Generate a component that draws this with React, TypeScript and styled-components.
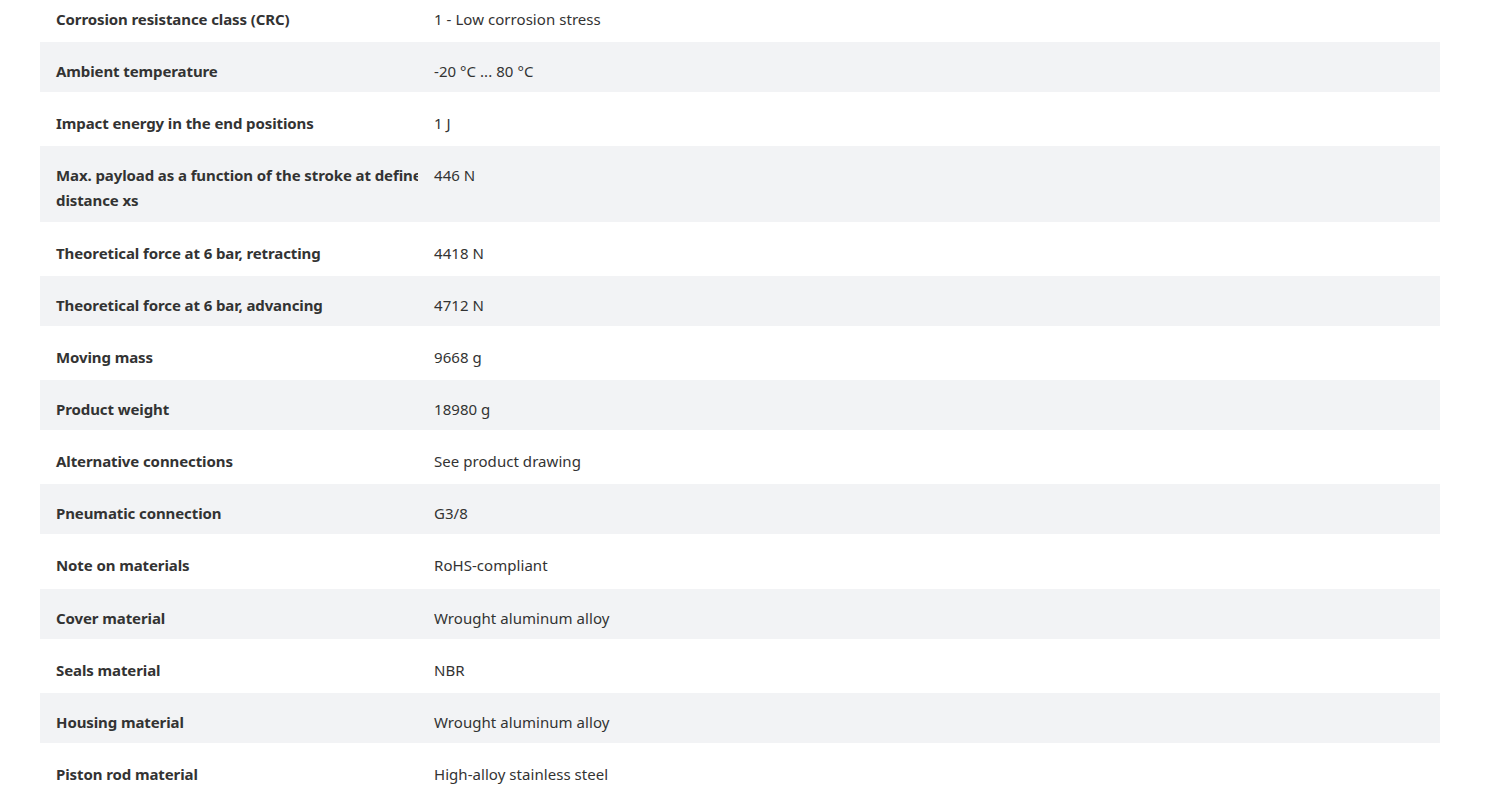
import styled, { createGlobalStyle } from 'styled-components';

const GlobalStyle = createGlobalStyle`
  html, body {
    margin: 0;
    padding: 0;
    background: #fff;
    overflow: hidden;
  }
  body {
    font-family: "Noto Sans", "Open Sans", sans-serif;
    color: #333;
  }
`;

// 技術データの行（ラベル／値）
const rows: { label: string[]; value: string }[] = [
  { label: ['Corrosion resistance class (CRC)'], value: '1 - Low corrosion stress' },
  { label: ['Ambient temperature'], value: '-20 °C ... 80 °C' },
  { label: ['Impact energy in the end positions'], value: '1 J' },
  { label: ['Max. payload as a function of the stroke at defined', 'distance xs'], value: '446 N' },
  { label: ['Theoretical force at 6 bar, retracting'], value: '4418 N' },
  { label: ['Theoretical force at 6 bar, advancing'], value: '4712 N' },
  { label: ['Moving mass'], value: '9668 g' },
  { label: ['Product weight'], value: '18980 g' },
  { label: ['Alternative connections'], value: 'See product drawing' },
  { label: ['Pneumatic connection'], value: 'G3/8' },
  { label: ['Note on materials'], value: 'RoHS-compliant' },
  { label: ['Cover material'], value: 'Wrought aluminum alloy' },
  { label: ['Seals material'], value: 'NBR' },
  { label: ['Housing material'], value: 'Wrought aluminum alloy' },
  { label: ['Piston rod material'], value: 'High-alloy stainless steel' },
];

export default function App() {
  return (
    <>
      <GlobalStyle />
      <Page>
        <DataTable>
          {rows.map((row, i) => (
            <Row key={i} striped={i % 2 === 1}>
              <LabelCell>
                {row.label.map((line, j) => (
                  <LabelLine key={j}>{line}</LabelLine>
                ))}
              </LabelCell>
              <ValueCell>{row.value}</ValueCell>
            </Row>
          ))}
        </DataTable>
      </Page>
    </>
  );
}

const Page = styled.div`
  padding: 0 60px 0 40px;
  margin-top: -10px;
`;

const DataTable = styled.div`
  display: flex;
  flex-direction: column;
  width: 1400px;
`;

const Row = styled.div<{ striped: boolean }>`
  display: grid;
  grid-template-columns: 378px 1fr;
  background-color: ${props => (props.striped ? '#f2f3f5' : '#fff')};
  border-bottom: 2px solid #fff;
  padding: 17px 0 8.15px;
`;

const LabelCell = styled.div`
  padding-left: 16px;
  overflow: hidden;
  font-size: 15px;
  line-height: 25px;
  font-weight: 700;
  letter-spacing: -0.1px;
  color: #333;
`;

const LabelLine = styled.div`
  white-space: nowrap;
`;

const ValueCell = styled.div`
  padding-left: 16px;
  font-size: 15px;
  line-height: 25px;
  font-weight: 400;
  letter-spacing: 0.05px;
  color: #333;
`;
